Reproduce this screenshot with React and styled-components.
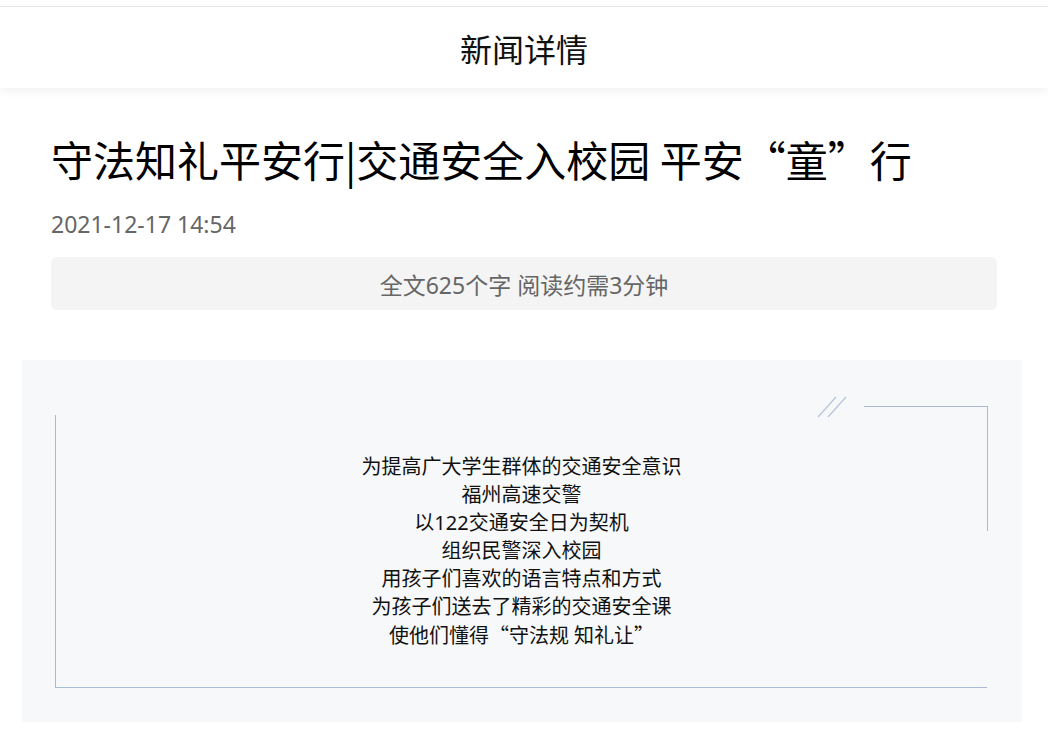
import React from 'react';
import styled, { createGlobalStyle } from 'styled-components';

const GlobalStyle = createGlobalStyle`
  html, body {
    margin: 0;
    padding: 0;
    background: #fff;
  }
  body {
    font-family: "Noto Sans", "Noto Sans CJK SC", sans-serif;
    color: #000;
  }
`;

const Page = styled.div`
  width: 100%;
  padding-top: 6px;
  padding-bottom: 13px;
`;

const TopBar = styled.header`
  height: 81px;
  border-top: 1px solid #e6e6e6;
  background: #fff;
  box-shadow: 0 4px 8px rgba(0, 0, 0, 0.05);
  display: flex;
  align-items: center;
  justify-content: center;
  font-size: 32px;
  color: #111;
  font-family: "Noto Sans CJK SC", sans-serif;
`;

const Article = styled.article`
  padding: 0 51px;
`;

const Title = styled.h1`
  margin: 41px 0 0;
  font-family: "Noto Sans CJK SC", sans-serif;
  font-size: 42px;
  line-height: 60px;
  font-weight: 400;
  color: #000;
  white-space: nowrap;
`;

const Time = styled.div`
  margin-top: 20px;
  font-size: 23px;
  line-height: 30px;
  color: #666;
`;

const Summary = styled.div`
  margin-top: 18px;
  height: 53px;
  border-radius: 6px;
  background: #f4f4f4;
  display: flex;
  align-items: center;
  justify-content: center;
  font-size: 23px;
  color: #666;
`;

const Section = styled.section`
  margin: 50px 26px 0 22px;
  padding: 46px 34px 34px 33px;
  background: #f7f8fa;
`;

const Frame = styled.div`
  position: relative;
  padding: 47px 0 38px;

  &::before {
    content: '';
    position: absolute;
    top: 9px;
    left: 0;
    right: 1px;
    bottom: 0;
    border-left: 1px solid #aabbd4;
    border-bottom: 1px solid #aabbd4;
    pointer-events: none;
  }

  &::after {
    content: '';
    position: absolute;
    top: 0;
    right: 0;
    width: 123px;
    height: 124px;
    border-top: 1px solid #aabbd4;
    border-right: 1px solid #aabbd4;
    pointer-events: none;
  }
`;

const Slashes = styled.svg`
  position: absolute;
  top: -10px;
  right: 141px;
`;

const Lines = styled.div`
  text-align: center;
  font-size: 20px;
  line-height: 28px;
  color: #111;
`;

const Quote = styled.span`
  font-family: "Noto Sans CJK SC", sans-serif;
`;

const lines = [
  '为提高广大学生群体的交通安全意识',
  '福州高速交警',
  '以122交通安全日为契机',
  '组织民警深入校园',
  '用孩子们喜欢的语言特点和方式',
  '为孩子们送去了精彩的交通安全课',
  '使他们懂得“守法规 知礼让”',
];

// quotes come from the CJK face so they take full width
const withQuotes = (t) =>
  t.split(/([“”])/).map((p, i) => (p === '“' || p === '”' ? <Quote key={i}>{p}</Quote> : p));

export default function App() {
  return (
    <Page>
      <GlobalStyle />
      <TopBar>新闻详情</TopBar>
      <Article>
        <Title>守法知礼平安行|交通安全入校园 平安“童”行</Title>
        <Time>2021-12-17 14:54</Time>
        <Summary>全文625个字 阅读约需3分钟</Summary>
      </Article>
      <Section>
        <Frame>
          <Slashes width="30" height="22" viewBox="0 0 30 22">
            <line x1="1" y1="21" x2="19" y2="1" stroke="#b7c4d8" strokeWidth="1.2" />
            <line x1="11" y1="21" x2="29" y2="1" stroke="#b7c4d8" strokeWidth="1.2" />
          </Slashes>
          <Lines>
            {lines.map((t, i) => (
              <div key={i}>{withQuotes(t)}</div>
            ))}
          </Lines>
        </Frame>
      </Section>
    </Page>
  );
}
